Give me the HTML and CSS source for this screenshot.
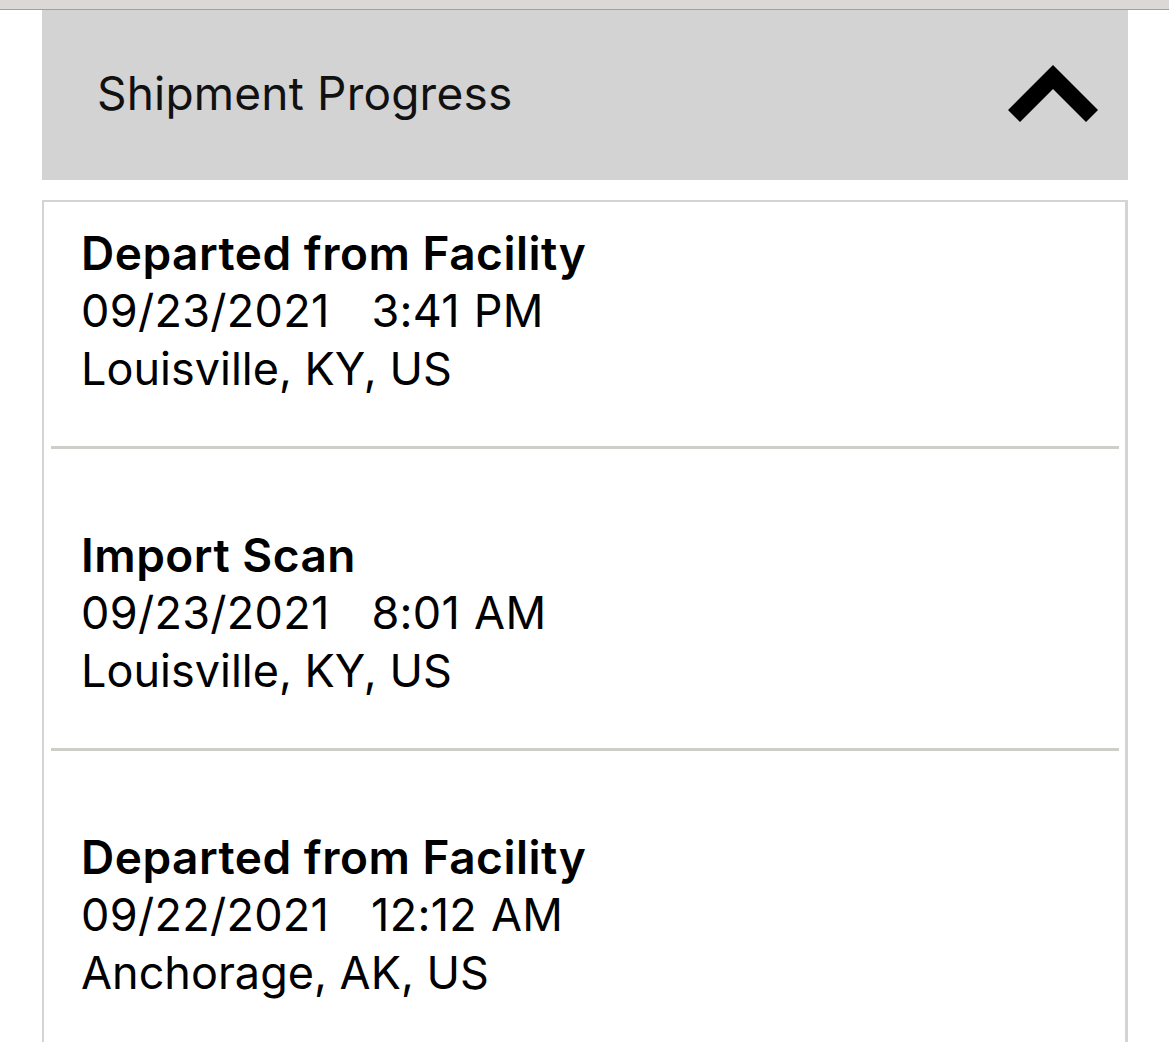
FILE: index.html
```html
<!DOCTYPE html>
<html lang="en">
<head>
<meta charset="utf-8">
<title>Shipment Progress</title>
<link rel="stylesheet" href="styles.css">
</head>
<body>
<div class="topbar"></div>
<main class="panel">
  <div class="panel-header">
    <h2 class="panel-title">Shipment Progress</h2>
    <svg class="chevron" width="90" height="58" viewBox="0 0 90 58" aria-hidden="true">
      <polyline points="6,52 45,13 84,52" fill="none" stroke="#000" stroke-width="17" stroke-linejoin="miter" stroke-linecap="butt"/>
    </svg>
  </div>
  <section class="events">
    <div class="event first">
      <div class="event-title">Departed from Facility</div>
      <div class="event-line event-date">09/23/2021   3:41 PM</div>
      <div class="event-line">Louisville, KY, US</div>
    </div>
    <div class="event">
      <div class="event-title">Import Scan</div>
      <div class="event-line event-date">09/23/2021   8:01 AM</div>
      <div class="event-line">Louisville, KY, US</div>
    </div>
    <div class="event">
      <div class="event-title">Departed from Facility</div>
      <div class="event-line event-date">09/22/2021   12:12 AM</div>
      <div class="event-line">Anchorage, AK, US</div>
    </div>
  </section>
</main>
</body>
</html>
```

FILE: styles.css
```css
html, body {
  margin: 0;
  padding: 0;
  background: #ffffff;
  overflow: hidden;
  height: 100%;
}

body {
  font-family: "Inter", "Liberation Sans", Arial, sans-serif;
  color: #000;
}

.topbar {
  height: 9px;
  background: #dcd8d5;
  border-bottom: 1px solid #a2a09e;
}

.panel {
  margin-left: 42px;
  width: 1086px;
}

.panel-header {
  height: 170px;
  background: #d3d3d3;
  display: flex;
  align-items: center;
  justify-content: space-between;
  padding: 0 30px 0 55px;
  box-sizing: border-box;
}

.panel-title {
  margin: 0 0 5px 0;
  font-size: 46px;
  font-weight: 400;
  line-height: 1;
  letter-spacing: 0.2px;
  color: #111;
}

.chevron {
  display: block;
  margin-bottom: 4px;
}

.events {
  margin-top: 20px;
  border: 2px solid #d4d4d4;
  border-right-width: 3px;
  padding: 0 6px 0 7px;
}

.event {
  padding: 77px 0 48px 30px;
  border-bottom: 3px solid #cfcdc8;
  font-size: 45px;
  line-height: 58px;
}

.event.first {
  padding-top: 22px;
}

.event-title {
  font-size: 46px;
  font-weight: 600;
  letter-spacing: 0.5px;
}

.event-line {
  white-space: pre;
}

.event-date {
  letter-spacing: 0.3px;
  word-spacing: 1px;
}
```
